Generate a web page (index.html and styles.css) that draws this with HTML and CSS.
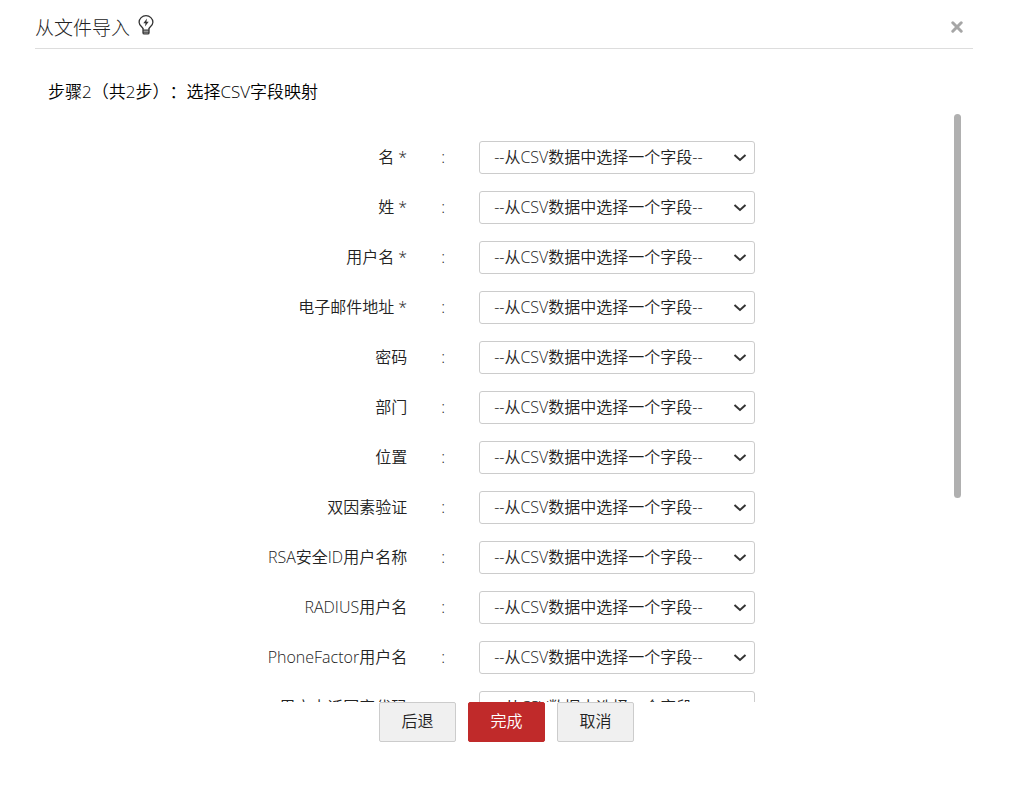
FILE: index.html
```
<!DOCTYPE html>
<html lang="zh-CN">
<head>
    <meta charset="UTF-8">
    <meta name="viewport" content="width=device-width, initial-scale=1.0">
    <title>从文件导入</title>
    <link rel="stylesheet" href="styles.css">
</head>
<body>
    <svg width="0" height="0" class="symbols">
        <symbol id="chevron" viewBox="0 0 14 8"><path d="M1.5 1 7 6l5.5-5" fill="none" stroke="#333" stroke-width="2"/></symbol>
    </svg>
    <div class="dialog">
        <div class="dialog-header">
            <h1>从文件导入</h1>
            <svg class="tip" width="16" height="20" viewBox="0 0 16 20" fill="none" stroke="#333" stroke-width="1.3">
                <path d="M5 13.5C4.7 12 1.1 10.6 1.1 7.3a6.9 6.6 0 0 1 13.8 0c0 3.3-3.6 4.7-3.9 6.2"/>
                <path d="M5 13v4.7q0 1.2 1.2 1.2h3.6q1.2 0 1.2-1.2V13M5 15.2h6M5 17.2h6"/>
                <path d="M9 3.6 5.3 8.3h2.2L7 11.4l3.7-4.6H8.4z" fill="#333" stroke="none"/>
            </svg>
            <button type="button" class="close" aria-label="关闭">
                <svg width="12" height="12" viewBox="0 0 12 12" stroke="#a6a6a6" stroke-width="3" stroke-linecap="round"><path d="M1.8 1.8l8.4 8.4M10.2 1.8l-8.4 8.4"/></svg>
            </button>
        </div>
        <h2>步骤2（共2步）：选择CSV字段映射</h2>
        <form class="mapping">
            <div class="fields" id="fields">
                <div class="row"><label for="fname">名 *</label><span>:</span><div class="select"><select id="fname"><option>--从CSV数据中选择一个字段--</option></select><svg><use href="#chevron"/></svg></div></div>
                <div class="row"><label for="lname">姓 *</label><span>:</span><div class="select"><select id="lname"><option>--从CSV数据中选择一个字段--</option></select><svg><use href="#chevron"/></svg></div></div>
                <div class="row"><label for="uname">用户名 *</label><span>:</span><div class="select"><select id="uname"><option>--从CSV数据中选择一个字段--</option></select><svg><use href="#chevron"/></svg></div></div>
                <div class="row"><label for="email">电子邮件地址 *</label><span>:</span><div class="select"><select id="email"><option>--从CSV数据中选择一个字段--</option></select><svg><use href="#chevron"/></svg></div></div>
                <div class="row"><label for="password">密码</label><span>:</span><div class="select"><select id="password"><option>--从CSV数据中选择一个字段--</option></select><svg><use href="#chevron"/></svg></div></div>
                <div class="row"><label for="dept">部门</label><span>:</span><div class="select"><select id="dept"><option>--从CSV数据中选择一个字段--</option></select><svg><use href="#chevron"/></svg></div></div>
                <div class="row"><label for="location">位置</label><span>:</span><div class="select"><select id="location"><option>--从CSV数据中选择一个字段--</option></select><svg><use href="#chevron"/></svg></div></div>
                <div class="row"><label for="tfa">双因素验证</label><span>:</span><div class="select"><select id="tfa"><option>--从CSV数据中选择一个字段--</option></select><svg><use href="#chevron"/></svg></div></div>
                <div class="row"><label for="rsa">RSA安全ID用户名称</label><span>:</span><div class="select"><select id="rsa"><option>--从CSV数据中选择一个字段--</option></select><svg><use href="#chevron"/></svg></div></div>
                <div class="row"><label for="radius">RADIUS用户名</label><span>:</span><div class="select"><select id="radius"><option>--从CSV数据中选择一个字段--</option></select><svg><use href="#chevron"/></svg></div></div>
                <div class="row"><label for="phonefactor">PhoneFactor用户名</label><span>:</span><div class="select"><select id="phonefactor"><option>--从CSV数据中选择一个字段--</option></select><svg><use href="#chevron"/></svg></div></div>
                <div class="row"><label for="country">用户电话国家代码</label><span>:</span><div class="select"><select id="country"><option>--从CSV数据中选择一个字段--</option></select><svg><use href="#chevron"/></svg></div></div>
            </div>
            <div class="scrollbar"></div>
        </form>
        <div class="buttons">
            <button type="button">后退</button>
            <button type="button" class="primary">完成</button>
            <button type="button">取消</button>
        </div>
    </div>
</body>
</html>
```
FILE: styles.css
```
* {box-sizing: border-box;}
body {margin: 0; background: #fff; color: #222;}
body, button, select {font-family: "Open Sans", "Noto Sans CJK SC", sans-serif; font-size: 16px; font-weight: 350;}
h1, h2 {margin: 0; font-weight: 350;}
.symbols {position: absolute;}

.dialog {display: flex; flex-direction: column; height: 100vh; padding: 0 37px 53px 35px;}
.dialog-header {display: flex; align-items: center; height: 49px; padding-top: 6px; border-bottom: 1px solid #ddd;}
.dialog-header h1 {padding-top: 2px; font-size: 19px; line-height: 28px; font-weight: 300;}
.tip {margin: 0 0 4px 8px;}
.close {display: flex; margin-left: auto; padding: 10px; border: 0; background: none; cursor: pointer;}
h2 {padding: 29px 13px 8px; font-size: 17px; line-height: 28px; color: #000; text-spacing-trim: space-all;}

.mapping {position: relative; flex: 1; min-height: 0;}
.fields {height: 100%; padding-top: 27px; overflow-y: auto; scrollbar-width: none;}
.row {display: grid; grid-template-columns: 41fr 72px 276px 24fr; height: 33px; margin-bottom: 17px; line-height: 32px;}
.row label {text-align: right;}
.row span {text-align: center;}
.select {position: relative;}
.select select {display: block; width: 100%; height: 33px; padding: 0 30px 2px 14px; border: 1px solid #ccc; border-radius: 3px; appearance: none; background: #fff; color: #222;}
.select svg {position: absolute; top: 13px; right: 8px; width: 14px; height: 8px; pointer-events: none;}
.scrollbar {position: absolute; top: 0; right: 12px; width: 7px; height: 384px; border-radius: 4px; background: #b0b0b0;}

.buttons {display: flex; justify-content: center; gap: 12px; padding-left: 5px;}
.buttons button {width: 77px; height: 40px; padding: 0 0 4px; border: 1px solid #ccc; border-radius: 2px; background: #f0f0f0; color: #222; cursor: pointer;}
.buttons .primary {border-color: #c02a2a; background: #c02a2a; color: #fff;}
```
